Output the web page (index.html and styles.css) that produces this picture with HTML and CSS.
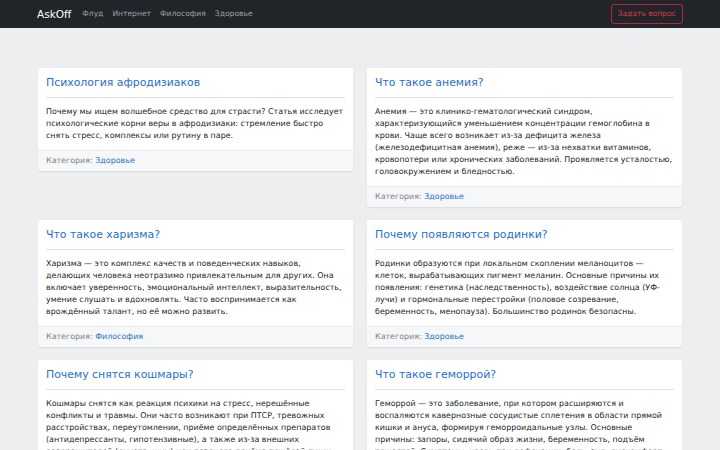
FILE: index.html
```html
<!DOCTYPE html>
<html lang="ru">
<head>
    <meta charset="UTF-8">
    <meta name="viewport" content="width=device-width, initial-scale=1.0">
    <title>AskOff</title>
    <link rel="stylesheet" href="styles.css">
</head>
<body>

<!-- Top navigation -->
<nav class="navbar">
    <div class="nav-inner">
        <a href="#" class="brand">AskOff</a>
        <ul class="nav-links">
            <li><a href="#">Флуд</a></li>
            <li><a href="#">Интернет</a></li>
            <li><a href="#">Философия</a></li>
            <li><a href="#">Здоровье</a></li>
        </ul>
        <a href="#" class="ask-btn">Задать вопрос</a>
    </div>
</nav>

<!-- Question cards -->
<main class="container">
    <div class="card">
        <div class="card-body">
            <h3 class="card-title"><a href="#">Психология афродизиаков</a></h3>
            <hr>
            <p>Почему мы ищем волшебное средство для страсти? Статья исследует психологические корни веры в афродизиаки: стремление быстро снять стресс, комплексы или рутину в паре.</p>
        </div>
        <div class="card-footer">Категория: <a href="#">Здоровье</a></div>
    </div>

    <div class="card">
        <div class="card-body">
            <h3 class="card-title"><a href="#">Что такое анемия?</a></h3>
            <hr>
            <p>Анемия — это клинико-гематологический синдром, характеризующийся уменьшением концентрации гемоглобина в крови. Чаще всего возникает из-за дефицита железа (железодефицитная анемия), реже — из-за нехватки витаминов, кровопотери или хронических заболеваний. Проявляется усталостью, головокружением и бледностью.</p>
        </div>
        <div class="card-footer">Категория: <a href="#">Здоровье</a></div>
    </div>

    <div class="card">
        <div class="card-body">
            <h3 class="card-title"><a href="#">Что такое харизма?</a></h3>
            <hr>
            <p>Харизма — это комплекс качеств и поведенческих навыков, делающих человека неотразимо привлекательным для других. Она включает уверенность, эмоциональный интеллект, выразительность, умение слушать и вдохновлять. Часто воспринимается как врождённый талант, но её можно развить.</p>
        </div>
        <div class="card-footer">Категория: <a href="#">Философия</a></div>
    </div>

    <div class="card">
        <div class="card-body">
            <h3 class="card-title"><a href="#">Почему появляются родинки?</a></h3>
            <hr>
            <p>Родинки образуются при локальном скоплении меланоцитов — клеток, вырабатывающих пигмент меланин. Основные причины их появления: генетика (наследственность), воздействие солнца (УФ-лучи) и гормональные перестройки (половое созревание, беременность, менопауза). Большинство родинок безопасны.</p>
        </div>
        <div class="card-footer">Категория: <a href="#">Здоровье</a></div>
    </div>

    <div class="card">
        <div class="card-body">
            <h3 class="card-title"><a href="#">Почему снятся кошмары?</a></h3>
            <hr>
            <p>Кошмары снятся как реакция психики на стресс, нерешённые конфликты и травмы. Они часто возникают при ПТСР, тревожных расстройствах, переутомлении, приёме определённых препаратов (антидепрессанты, гипотензивные), а также из-за внешних раздражителей (духота, шум) или позднего приёма тяжёлой пищи.</p>
        </div>
        <div class="card-footer">Категория: <a href="#">Здоровье</a></div>
    </div>

    <div class="card">
        <div class="card-body">
            <h3 class="card-title"><a href="#">Что такое геморрой?</a></h3>
            <hr>
            <p>Геморрой — это заболевание, при котором расширяются и воспаляются кавернозные сосудистые сплетения в области прямой кишки и ануса, формируя геморроидальные узлы. Основные причины: запоры, сидячий образ жизни, беременность, подъём тяжестей. Симптомы: кровь при дефекации, боль, зуд, дискомфорт.</p>
        </div>
        <div class="card-footer">Категория: <a href="#">Здоровье</a></div>
    </div>
</main>

</body>
</html>
```

FILE: styles.css
```css
body {
    font-family: "DejaVu Sans", Verdana, sans-serif;
    font-size: 7.95px;
    line-height: 12px;
    color: #212529;
    margin: 0;
    background-color: #eceef0;
}
a {
    text-decoration: none;
}
.navbar {
    background-color: #212529;
    height: 28px;
}
.nav-inner {
    width: 646px;
    margin: 0 auto;
    height: 100%;
    display: flex;
    align-items: center;
}
.brand {
    color: #fff;
    font-size: 10.5px;
    margin-right: 11px;
}
.nav-links {
    display: flex;
    list-style: none;
    margin: 0;
    padding: 0;
    gap: 9px;
    flex: 1;
}
.nav-links a {
    color: rgba(255, 255, 255, 0.55);
    font-size: 7.6px;
}
.ask-btn {
    color: #dc3545;
    border: 1px solid #b02a37;
    border-radius: 3px;
    padding: 3px 6px;
    font-size: 7.6px;
    line-height: 12px;
}
.container {
    width: 644px;
    margin: 40px auto 0;
    display: grid;
    grid-template-columns: 1fr 1fr;
    column-gap: 14px;
    row-gap: 13px;
    align-items: start;
}
.card {
    background-color: #fff;
    border-radius: 3px;
    box-shadow: 0px 1px 2px rgba(0, 0, 0, 0.08);
    overflow: hidden;
}
.card-body {
    padding: 8px 8px 8px;
}
.card-title {
    font-size: 10.9px;
    font-weight: normal;
    line-height: 14px;
    margin: 0;
}
.card-title a, .card-footer a {
    color: #1f6fd0;
}
hr {
    border: none;
    border-top: 1px solid #dfe2e6;
    margin: 7px 0 8px;
}
.card-body p {
    margin: 0;
}
.card-footer {
    background-color: #f6f7f8;
    border-top: 1px solid #e9ebee;
    padding: 4px 8px;
    color: #7a8188;
}
```
